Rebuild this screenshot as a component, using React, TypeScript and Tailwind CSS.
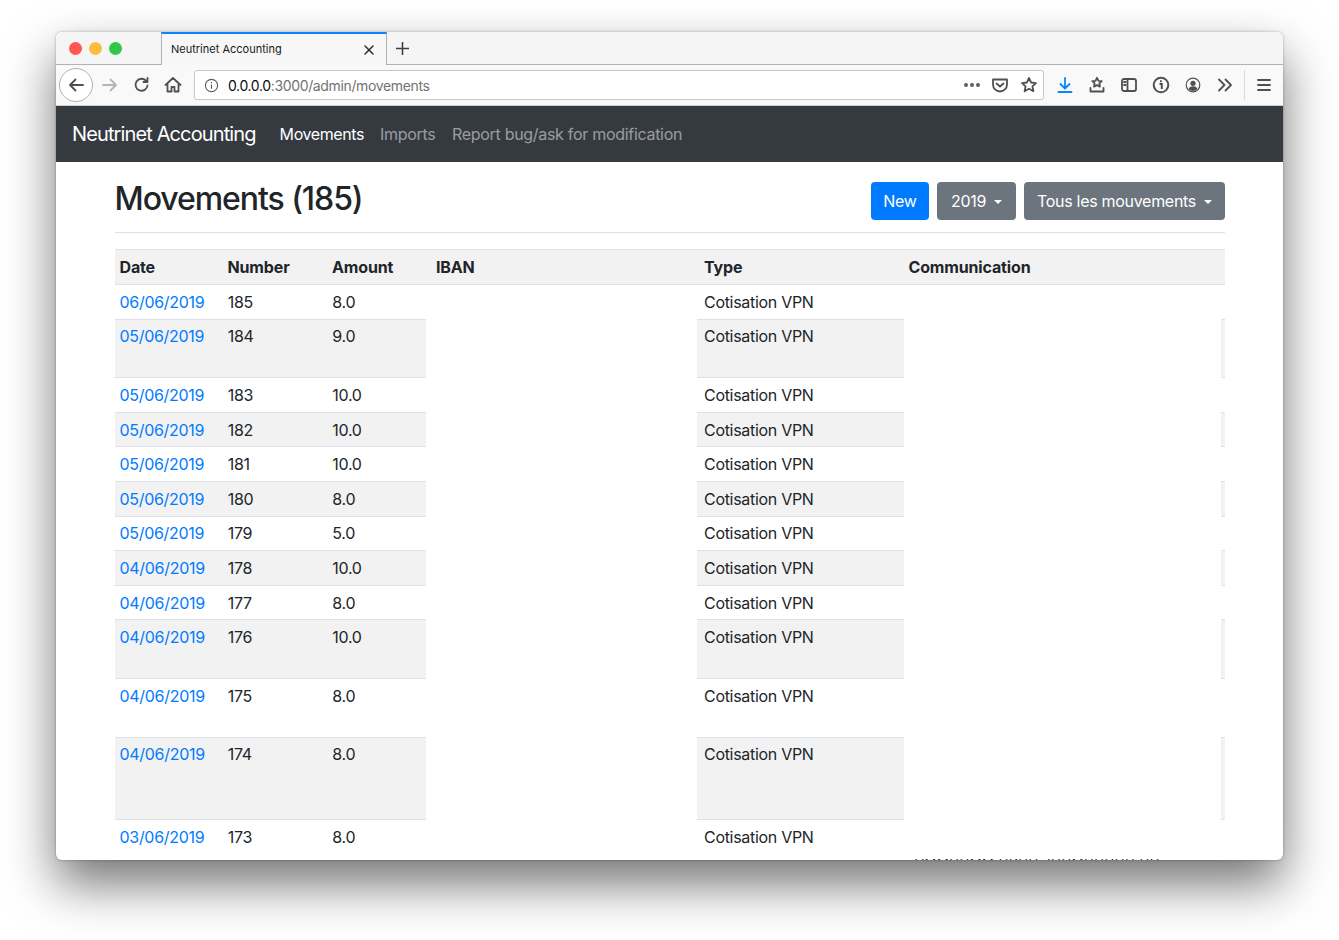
import React from "react";

const rows: [string, string, string, number][] = [
  ["06/06/2019", "185", "8.0", 1],
  ["05/06/2019", "184", "9.0", 2],
  ["05/06/2019", "183", "10.0", 1],
  ["05/06/2019", "182", "10.0", 1],
  ["05/06/2019", "181", "10.0", 1],
  ["05/06/2019", "180", "8.0", 1],
  ["05/06/2019", "179", "5.0", 1],
  ["04/06/2019", "178", "10.0", 1],
  ["04/06/2019", "177", "8.0", 1],
  ["04/06/2019", "176", "10.0", 2],
  ["04/06/2019", "175", "8.0", 2],
  ["04/06/2019", "174", "8.0", 3],
  ["03/06/2019", "173", "8.0", 1],
];

const heights: Record<number, string> = { 1: "h-[34.6px]", 2: "h-[58.6px]", 3: "h-[82.6px]" };

function Caret() {
  return <span className="ml-2 inline-block align-[3px] border-x-[4.8px] border-t-[4.8px] border-x-transparent border-t-white" />;
}

function Ico({ children, className = "" }: { children: React.ReactNode; className?: string }) {
  return (
    <svg width="18" height="18" viewBox="0 0 18 18" fill="none" stroke="#505054" strokeWidth="1.8" strokeLinecap="round" strokeLinejoin="round" className={className}>
      {children}
    </svg>
  );
}

function Row({ r, i }: { r: [string, string, string, number]; i: number }) {
  const odd = i % 2 === 1;
  const shade = odd ? "bg-[#f2f2f2]" : "bg-white";
  const border = "border-b border-[#dee2e6]";
  return (
    <div className={`grid grid-cols-[108px_104.5px_98.5px_271px_207px_317px_4px] ${heights[r[3]]}`}>
      <div className={`${shade} ${i < 12 ? border : ""} pl-[4.5px] pt-[4.8px] text-[#007bff]`}>{r[0]}</div>
      <div className={`${shade} ${i < 12 ? border : ""} pl-[4.8px] pt-[4.8px]`}>{r[1]}</div>
      <div className={`${shade} ${i < 12 ? border : ""} pl-[4.8px] pt-[4.8px]`}>{r[2]}</div>
      <div className="bg-white" />
      <div className={`${shade} ${i < 12 ? border : ""} pl-[7px] pt-[4.8px]`}>Cotisation VPN</div>
      {i === 12 ? (
        <div className="bg-white pl-[11px] pt-[35px] text-[13px] tracking-[0.6px] whitespace-nowrap">VMMHHMM HKHH JHHMHHHHH HH</div>
      ) : (
        <div className="bg-white" />
      )}
      <div className={`${shade} ${i < 12 ? border : ""}`} />
    </div>
  );
}

export default function App() {
  return (
    <div className="h-[940px] w-full overflow-hidden bg-white pl-[56px] pt-[32px] text-[16px] tracking-[-0.3px] text-[#212529] font-['Inter','Liberation_Sans',sans-serif]">
      <div className="flex h-[828px] w-[1227px] flex-col overflow-hidden rounded-[6px] bg-white shadow-[0_24px_50px_rgba(0,0,0,0.55),0_0_3px_rgba(0,0,0,0.3)]">
        {/* Tab bar */}
        <div className="flex h-[33px] shrink-0 items-stretch border-b border-[#b1b1b3] bg-[#f5f5f5]">
          <div className="flex w-[105px] items-center gap-[7px] pl-[13px]">
            <span className="h-[13px] w-[13px] rounded-full bg-[#fc5753]" />
            <span className="h-[13px] w-[13px] rounded-full bg-[#fdbc40]" />
            <span className="h-[13px] w-[13px] rounded-full bg-[#33c748]" />
          </div>
          <div className="mb-[-1px] flex w-[226px] items-center justify-between border-x border-[#b1b1b3] border-t-2 border-t-[#0a84ff] bg-[#f7f7f8] pl-[9px] pr-[11px] text-[11px] tracking-normal text-[#18181a]">
            <span>Neutrinet Accounting</span>
            <svg width="12" height="12" viewBox="0 0 12 12" stroke="#2b2b2e" strokeWidth="1.5" strokeLinecap="round"><path d="M2 2l8 8M10 2l-8 8" /></svg>
          </div>
          <div className="flex items-center pl-[8px]">
            <svg width="15" height="15" viewBox="0 0 15 15" stroke="#3f3f43" strokeWidth="1.6"><path d="M7.500 1v13M1 7.500h13" /></svg>
          </div>
        </div>
        {/* Toolbar */}
        <div className="flex h-[41px] shrink-0 items-center border-b border-[#d0d0d2] bg-[#f9f9fa] pl-[3px]">
          <div className="flex h-[34px] w-[34px] items-center justify-center rounded-full border border-[#b1b1b3] bg-white">
            <Ico><path d="M16 9H3M8.500 3.500L3 9l5.500 5.500" /></Ico>
          </div>
          <Ico className="ml-[8px]"><path d="M2 9h13M9.500 3.500L15 9l-5.500 5.500" stroke="#b5b5b8" /></Ico>
          <Ico className="ml-[14px]"><path d="M14.500 9.500a6 6 0 1 1-1.700-5M14.500 2v4h-4" /></Ico>
          <Ico className="ml-[13px]"><path d="M1.500 9L9 2l7.500 7M3.500 8v7.500h4V11h3v4.500h4V8" /></Ico>
          <div className="ml-[12px] flex h-[30px] w-[850px] items-center rounded-[3px] border border-[#c6c6c8] bg-white pl-[9px] pr-[5px]">
            <svg width="15" height="15" viewBox="0 0 16 16" fill="none" stroke="#5c5c60" strokeWidth="1.200"><circle cx="8" cy="8" r="6.500" /><path d="M8 7v4.500M8 4.200v1.300" /></svg>
            <span className="ml-[9px] text-[14px] tracking-[-0.36px] text-[#0c0c0d]">0.0.0.0<span className="text-[#737373]">:3000/admin/movements</span></span>
            <div className="ml-auto flex items-center gap-[11px]">
              <span className="flex gap-[2px]">
                <span className="h-[4px] w-[4px] rounded-full bg-[#5f5f63]" />
                <span className="h-[4px] w-[4px] rounded-full bg-[#5f5f63]" />
                <span className="h-[4px] w-[4px] rounded-full bg-[#5f5f63]" />
              </span>
              <Ico><path d="M2 3.500h14v5a7 7 0 0 1-14 0zM5.500 7.500L9 10.500l3.500-3" /></Ico>
              <Ico><path d="M9 2l2.100 4.500 4.900.6-3.600 3.300 1 4.800L9 12.800l-4.400 2.400 1-4.800L2 7.100l4.900-.6z" /></Ico>
            </div>
          </div>
          <div className="ml-[12px] flex items-center gap-[14px]">
            <Ico><path d="M9 2v10M4.500 8L9 12.500 13.500 8M2.500 16h13" stroke="#0a84ff" /></Ico>
            <Ico><path d="M9 1.800l1.500 3 3.200.4-2.300 2.200.6 3.200L9 9.100l-3 1.500.6-3.200-2.300-2.200 3.200-.4zM2.500 12v3.500h13V12" /></Ico>
            <Ico><rect x="2" y="3" width="14" height="12" rx="2" /><path d="M7.500 3v12M4 6h1.500M4 9h1.500" /></Ico>
            <svg width="18" height="18" viewBox="0 0 18 18" fill="none"><circle cx="9" cy="9" r="7.300" stroke="#505054" strokeWidth="2" /><path d="M8 5.300h1.800M7.500 8h2.300v5" stroke="#505054" strokeWidth="2" /></svg>
            <svg width="18" height="18" viewBox="0 0 18 18" fill="none"><circle cx="9" cy="9" r="6.800" stroke="#505054" strokeWidth="1.200" /><circle cx="9" cy="7.300" r="2.600" fill="#505054" /><path d="M4.500 13c1-2 2.500-2.700 4.500-2.700s3.500.7 4.500 2.700a6 6 0 0 1-9 0z" fill="#505054" /></svg>
            <Ico><path d="M3 3.500L8.500 9 3 14.500M9.500 3.500L15 9l-5.500 5.500" /></Ico>
          </div>
          <div className="ml-[10px] h-[30px] w-px bg-[#d9d9db]" />
          <Ico className="ml-[10px]"><path d="M3 4h12M3 9h12M3 14h12" /></Ico>
        </div>
        {/* Navbar */}
        <nav className="flex h-[56px] shrink-0 items-center bg-[#343a40] pl-[16px]">
          <span className="mr-[16px] text-[20px] tracking-[-0.88px] text-white">Neutrinet Accounting</span>
          <a className="px-[8px] tracking-[-0.4px] text-white">Movements</a>
          <a className="px-[8px] text-white/50">Imports</a>
          <a className="ml-[0.5px] px-[8px] text-white/50">Report bug/ask for modification</a>
        </nav>
        {/* Content */}
        <main className="min-h-0 flex-1 pl-[59px] pr-[58px]">
          <div className="flex h-[71px] items-start justify-between border-b border-[#dee2e6] pt-[20px]">
            <h1 className="mt-[1px] -ml-[0.5px] text-[32px] font-medium leading-[32px] tracking-[-1.07px]">Movements (185)</h1>
            <div className="flex gap-[8px]">
              <button className="h-[38px] w-[58px] rounded-[4px] bg-[#007bff] text-white">New</button>
              <button className="h-[38px] w-[79px] rounded-[4px] bg-[#6c757d] text-white">2019<Caret /></button>
              <button className="h-[38px] w-[201px] rounded-[4px] bg-[#6c757d] text-white">Tous les mouvements<Caret /></button>
            </div>
          </div>
          <div className="mt-[16px] grid h-[36px] grid-cols-[108px_104.5px_104px_268px_204.5px_1fr] items-center border-y border-[#dee2e6] bg-[#f2f2f2] font-bold tracking-[-0.15px]">
            {["Date", "Number", "Amount", "IBAN", "Type", "Communication"].map((h) => (
              <div key={h} className="pl-[4.5px]">{h}</div>
            ))}
          </div>
          {rows.map((r, i) => (
            <Row key={r[1]} r={r} i={i} />
          ))}
        </main>
      </div>
    </div>
  );
}
